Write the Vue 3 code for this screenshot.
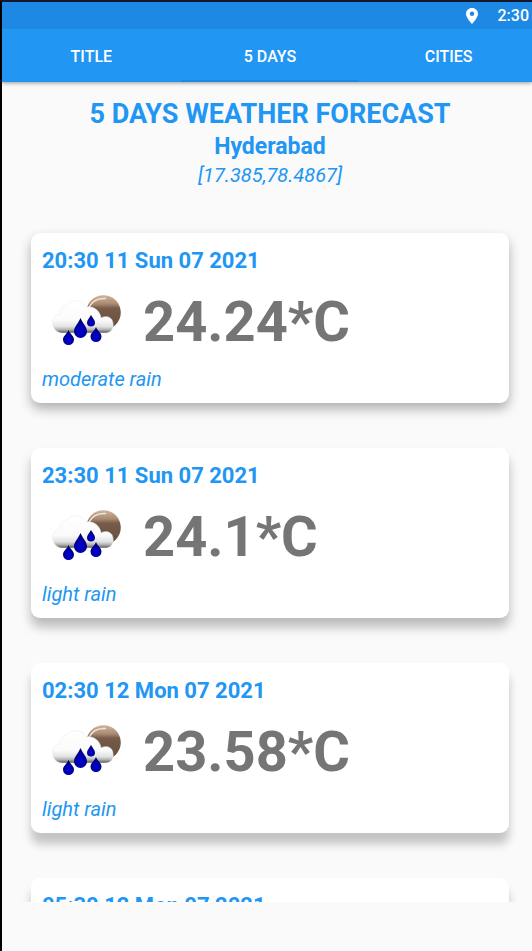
<script setup>
import { ref } from 'vue'

const tabs = ['TITLE', '5 DAYS', 'CITIES']
const active = ref('5 DAYS')

const forecast = [
  { time: '20:30 11 Sun 07 2021', temp: '24.24*C', text: 'moderate rain' },
  { time: '23:30 11 Sun 07 2021', temp: '24.1*C', text: 'light rain' },
  { time: '02:30 12 Mon 07 2021', temp: '23.58*C', text: 'light rain' },
  { time: '05:30 12 Mon 07 2021', temp: '23.11*C', text: 'light rain' },
]
</script>

<template>
  <div class="screen">
    <svg class="defs" width="0" height="0" aria-hidden="true">
      <defs>
        <linearGradient id="moon" x1="0" y1="0" x2="0" y2="1">
          <stop offset="0" stop-color="#d3b49b" />
          <stop offset="0.25" stop-color="#a98a73" />
          <stop offset="0.38" stop-color="#765b48" />
          <stop offset="1" stop-color="#654e3f" />
        </linearGradient>
        <linearGradient id="cloud" gradientUnits="userSpaceOnUse" x1="0" y1="16" x2="0" y2="48">
          <stop offset="0" stop-color="#ffffff" />
          <stop offset="0.6" stop-color="#fbfbfb" />
          <stop offset="0.8" stop-color="#e2e2e2" />
          <stop offset="0.9" stop-color="#b0b0b0" />
          <stop offset="1" stop-color="#505050" />
        </linearGradient>
        <radialGradient id="drop" cx="0.5" cy="0.65" r="0.6">
          <stop offset="0" stop-color="#0000d8" />
          <stop offset="0.5" stop-color="#0000b0" />
          <stop offset="1" stop-color="#000048" />
        </radialGradient>
        <filter id="soft" x="-10%" y="-10%" width="120%" height="120%">
          <feGaussianBlur stdDeviation="0.7" />
        </filter>
      </defs>
    </svg>

    <header class="bar">
      <div class="status">
        <svg class="pin" viewBox="0 0 12 16" role="img" aria-label="Location">
          <path fill="#fff" fill-rule="evenodd" d="M6 0C2.6 0 0 2.6 0 5.800C0 10 6 16 6 16S12 10 12 5.800C12 2.600 9.400 0 6 0ZM6 3.600A2.200 2.200 0 1 1 6 8A2.200 2.200 0 1 1 6 3.600Z" />
        </svg>
        <time>2:30</time>
      </div>
      <nav class="tabs">
        <button
          v-for="tab in tabs"
          :key="tab"
          type="button"
          class="tab"
          :class="{ active: active === tab }"
          @click="active = tab"
        >{{ tab }}</button>
      </nav>
    </header>

    <main class="content">
      <section class="place">
        <h1>5 DAYS WEATHER FORECAST</h1>
        <h2>Hyderabad</h2>
        <p>[17.385,78.4867]</p>
      </section>

      <ul class="list">
        <li v-for="item in forecast" :key="item.time" class="card">
          <h3>{{ item.time }}</h3>
          <div class="reading">
            <svg class="icon" viewBox="2 2 100 70" role="img" :aria-label="item.text">
              <g filter="url(#soft)">
                <circle cx="63.500" cy="27.500" r="17.300" fill="url(#moon)" />
                <path d="M48.500 23C52 15.500 58 12.800 66 13.500" fill="none" stroke="#f0e6de" stroke-width="1.500" />
                <path d="M21 48C16 47 12.500 43 12.500 38C12.500 33 15 29.500 20 29C20 23 23 20.500 27 20C31 14 42 14 46 22C54 21 60 26 61 33C66 30 73 32 73 39C74 44 70 48 66 48Z" fill="url(#cloud)" stroke="#ececec" stroke-width="0.600" />
                <path d="M40.500 33C43 39 47 42 47 46.500A6.500 6.500 0 0 1 34 46.500C34 42 38 39 40.500 33Z" fill="url(#drop)" />
                <path d="M51 30C52.500 33 55 35 55 37.500A4 4 0 0 1 47 37.500C47 35 49.500 33 51 30Z" fill="url(#drop)" />
                <path d="M28.500 45C30 49 34 51 34 54.500A5.300 5.300 0 0 1 23 54.500C23 51 27 49 28.500 45Z" fill="url(#drop)" />
                <path d="M56 42C57.500 46 61.500 48 61.500 51.500A5.300 5.300 0 0 1 50.500 51.500C50.500 48 54.500 46 56 42Z" fill="url(#drop)" />
              </g>
            </svg>
            <strong>{{ item.temp }}</strong>
          </div>
          <p>{{ item.text }}</p>
        </li>
      </ul>
    </main>
  </div>
</template>

<style>
body {
  background: #fafafa;
}
</style>

<style scoped>
.screen {
  box-sizing: border-box;
  height: 100vh;
  display: flex;
  flex-direction: column;
  overflow: hidden;
  padding-bottom: 49px;
  border-top: 2px solid #15172b;
  border-left: 2px solid #000;
  background: #fafafa;
  color: #2196f3;
  font-family: Roboto, sans-serif;
}
.defs {
  position: absolute;
}
h1,
h2,
h3,
p,
ul {
  margin: 0;
  padding: 0;
}
.bar {
  flex: none;
  z-index: 1;
  background: #2196f3;
  box-shadow: 0 1px 4px rgba(0, 0, 0, 0.4);
}
.status {
  display: flex;
  align-items: center;
  justify-content: flex-end;
  gap: 20px;
  height: 27px;
  padding-right: 3px;
  background: #1e88e5;
  color: #fff;
  font-size: 16px;
  font-weight: 500;
}
.pin {
  width: 12px;
  height: 16px;
}
.tabs {
  display: grid;
  grid-template-columns: repeat(3, 1fr);
  height: 53px;
  margin-right: -6px;
}
.tab {
  padding: 4px 0 0;
  border: 0;
  border-bottom: 2px solid transparent;
  background: none;
  color: #fff;
  font-family: inherit;
  font-size: 16px;
  font-weight: 500;
  cursor: pointer;
}
.tab.active {
  border-bottom-color: #1e88e5;
}
.content {
  flex: 1;
  min-height: 0;
  overflow: hidden auto;
  scrollbar-width: none;
}
.place {
  padding: 15px 0 0 6px;
  text-align: center;
}
h1 {
  font-size: 27px;
  line-height: 34px;
}
h2 {
  font-size: 23px;
  line-height: 32px;
}
.place p {
  font-size: 20px;
  font-style: italic;
  line-height: 24px;
}
.list {
  display: grid;
  gap: 45px;
  padding: 46px 23px 45px 29px;
  list-style: none;
}
.card {
  box-sizing: border-box;
  height: 170px;
  padding: 12px 11px 0;
  border-radius: 9px;
  background: #fff;
  box-shadow: 0 6px 12px rgba(0, 0, 0, 0.3);
}
.card:nth-child(2) {
  box-shadow: 0 9px 11px rgba(0, 0, 0, 0.26);
}
.card:nth-child(n + 3) {
  box-shadow: 0 11px 10px rgba(0, 0, 0, 0.22);
}
.card h3 {
  font-size: 22px;
  line-height: 32px;
}
.reading {
  display: flex;
  align-items: center;
  gap: 1px;
  height: 89px;
}
.icon {
  width: 100px;
  height: 70px;
}
.reading strong {
  color: #757575;
  font-size: 56px;
  line-height: 64px;
}
.card p {
  font-size: 20px;
  font-style: italic;
  line-height: 26px;
}
</style>
